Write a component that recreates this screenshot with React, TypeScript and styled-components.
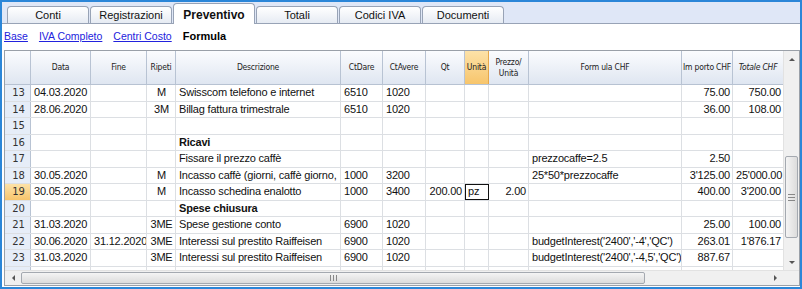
import React from "react";
import styled, { createGlobalStyle, css } from "styled-components";

const GlobalStyle = createGlobalStyle`
  html, body {
    margin: 0;
    padding: 0;
    overflow: hidden;
    background: #ffffff;
  }
`;

const cols = "26px 60px 56px 29px 165px 42px 43px 39px 24px 40px 153px 51px 51px";

type Align = "left" | "right" | "center";

interface RowData {
  n: number;
  data?: string;
  fine?: string;
  rip?: string;
  desc?: string;
  bold?: boolean;
  dare?: string;
  avere?: string;
  qt?: string;
  unit?: string;
  prezzo?: string;
  formula?: string;
  importo?: string;
  totale?: string;
  current?: boolean;
}

const rows: RowData[] = [
  { n: 13, data: "04.03.2020", rip: "M", desc: "Swisscom telefono e internet", dare: "6510", avere: "1020", importo: "75.00", totale: "750.00" },
  { n: 14, data: "28.06.2020", rip: "3M", desc: "Billag fattura trimestrale", dare: "6510", avere: "1020", importo: "36.00", totale: "108.00" },
  { n: 15 },
  { n: 16, desc: "Ricavi", bold: true },
  { n: 17, desc: "Fissare il prezzo caffè", formula: "prezzocaffe=2.5", importo: "2.50" },
  { n: 18, data: "30.05.2020", rip: "M", desc: "Incasso caffè (giorni, caffè giorno,", dare: "1000", avere: "3200", formula: "25*50*prezzocaffe", importo: "3'125.00", totale: "25'000.00" },
  { n: 19, data: "30.05.2020", rip: "M", desc: "Incasso  schedina enalotto", dare: "1000", avere: "3400", qt: "200.00", unit: "pz", prezzo: "2.00", importo: "400.00", totale: "3'200.00", current: true },
  { n: 20, desc: "Spese chiusura", bold: true },
  { n: 21, data: "31.03.2020", rip: "3ME", desc: "Spese gestione conto", dare: "6900", avere: "1020", importo: "25.00", totale: "100.00" },
  { n: 22, data: "30.06.2020", fine: "31.12.2020", rip: "3ME", desc: "Interessi sul prestito Raiffeisen", dare: "6900", avere: "1020", formula: "budgetInterest('2400','-4','QC')", importo: "263.01", totale: "1'876.17" },
  { n: 23, data: "31.03.2020", rip: "3ME", desc: "Interessi sul prestito Raiffeisen", dare: "6900", avere: "1020", formula: "budgetInterest('2400','-4,5','QC')", importo: "887.67" },
  { n: 24 },
];

const tabs = ["Conti", "Registrazioni", "Preventivo", "Totali", "Codici IVA", "Documenti"];

export default function App() {
  return (
    <>
      <GlobalStyle />
      <Frame>
        <TabBar>
          {tabs.map((t) => (
            <Tab key={t} $active={t === "Preventivo"}>
              {t}
            </Tab>
          ))}
        </TabBar>
        <Content>
          <Views>
            <ViewLink>Base</ViewLink>
            <ViewLink>IVA Completo</ViewLink>
            <ViewLink>Centri Costo</ViewLink>
            <ViewActive>Formula</ViewActive>
          </Views>
          <Table>
            <TableMain>
              <Body>
                <Header>
                  <HeadCell />
                  <HeadCell>Data</HeadCell>
                  <HeadCell>Fine</HeadCell>
                  <HeadCell>Ripeti</HeadCell>
                  <HeadCell>Descrizione</HeadCell>
                  <HeadCell>CtDare</HeadCell>
                  <HeadCell>CtAvere</HeadCell>
                  <HeadCell>Qt</HeadCell>
                  <HeadCell $hot>Unità</HeadCell>
                  <HeadCell $wrap>
                    Prezzo/
                    <br />
                    Unità
                  </HeadCell>
                  <HeadCell>Form ula CHF</HeadCell>
                  <HeadCell>Im porto CHF</HeadCell>
                  <HeadCell $italic>Totale CHF</HeadCell>
                </Header>
                {rows.map((r) => (
                  <Row key={r.n}>
                    <RowNum $hot={r.current}>{r.n}</RowNum>
                    <Cell>{r.data}</Cell>
                    <Cell>{r.fine}</Cell>
                    <Cell $align="center">{r.rip}</Cell>
                    <Cell $bold={r.bold}>{r.desc}</Cell>
                    <Cell>{r.dare}</Cell>
                    <Cell>{r.avere}</Cell>
                    <Cell $align="right">{r.qt}</Cell>
                    {r.current ? <EditCell>{r.unit}</EditCell> : <Cell>{r.unit}</Cell>}
                    <Cell $align="right">{r.prezzo}</Cell>
                    <Cell>{r.formula}</Cell>
                    <Cell $align="right">{r.importo}</Cell>
                    <Cell $align="right">{r.totale}</Cell>
                  </Row>
                ))}
              </Body>
              <VScroll>
                <ArrowBtn>
                  <Tri $dir="up" />
                </ArrowBtn>
                <VTrack>
                  <VThumb>
                    <Grip />
                  </VThumb>
                </VTrack>
                <ArrowBtn>
                  <Tri $dir="down" />
                </ArrowBtn>
              </VScroll>
            </TableMain>
            <HScroll>
              <HArrow>
                <Tri $dir="left" />
              </HArrow>
              <HTrack>
                <HThumb>
                  <HGrip />
                </HThumb>
              </HTrack>
              <HArrow>
                <Tri $dir="right" />
              </HArrow>
              <Corner />
            </HScroll>
          </Table>
        </Content>
      </Frame>
    </>
  );
}

const Frame = styled.div`
  width: 802px;
  height: 289px;
  box-sizing: border-box;
  border: 2px solid #2b86d8;
  background: #dfe7f7;
  display: flex;
  flex-direction: column;
  font-family: "Liberation Sans", Arial, sans-serif;
  overflow: hidden;
`;

const TabBar = styled.div`
  height: 21px;
  display: flex;
  align-items: flex-end;
  padding-left: 5px;
  gap: 1px;
`;

const Tab = styled.div<{ $active?: boolean }>`
  width: 82px;
  height: 17px;
  box-sizing: border-box;
  border: 1px solid #98a3b6;
  border-bottom: none;
  border-radius: 4px 4px 0 0;
  background: linear-gradient(#ffffff, #e6ebf3);
  font-size: 11px;
  color: #111;
  display: flex;
  align-items: center;
  justify-content: center;
  ${(p) =>
    p.$active &&
    css`
      height: 21px;
      margin-bottom: -1px;
      background: #ffffff;
      font-weight: bold;
      font-size: 12px;
      position: relative;
      padding-top: 1px;
    `}
`;

const Content = styled.div`
  flex: 1;
  background: #ffffff;
  border-top: 1px solid #98a3b6;
  display: flex;
  flex-direction: column;
  padding: 0 0 1px 2px;
  min-height: 0;
`;

const Views = styled.div`
  height: 26px;
  display: flex;
  align-items: center;
  gap: 11px;
  padding: 0 0 2px 0;
  box-sizing: border-box;
  font-size: 10.5px;
`;

const ViewLink = styled.span`
  color: #2222dd;
  text-decoration: underline;
`;

const ViewActive = styled.span`
  color: #000;
  font-weight: bold;
  font-size: 11px;
`;

const Table = styled.div`
  flex: 1;
  border: 1px solid #9aa0a8;
  display: flex;
  flex-direction: column;
  min-height: 0;
`;

const TableMain = styled.div`
  flex: 1;
  display: flex;
  min-height: 0;
  overflow: hidden;
`;

const Body = styled.div`
  width: 779px;
  overflow: hidden;
`;

const Header = styled.div`
  display: grid;
  grid-template-columns: ${cols};
  height: 34px;
  background: linear-gradient(#fbfcfe, #dfe6f1);
  border-bottom: 1px solid #b7c2d2;
  box-sizing: border-box;
`;

const HeadCell = styled.div<{ $hot?: boolean; $italic?: boolean; $wrap?: boolean }>`
  border-right: 1px solid #b8c3d3;
  display: flex;
  align-items: center;
  justify-content: center;
  text-align: center;
  font-size: 8.5px;
  line-height: 11px;
  letter-spacing: -0.2px;
  white-space: ${(p) => (p.$wrap ? "normal" : "nowrap")};
  overflow: hidden;
  color: #222;
  font-family: "DejaVu Sans Condensed", "DejaVu Sans", sans-serif;
  font-style: ${(p) => (p.$italic ? "italic" : "normal")};
  ${(p) =>
    p.$hot &&
    css`
      background: linear-gradient(#fde2a8, #f7c56c);
      border-right-color: #e6a84a;
    `}
`;

const Row = styled.div`
  display: grid;
  grid-template-columns: ${cols};
  height: 16.55px;
  box-sizing: border-box;
  border-bottom: 1px solid #dcdfe3;
`;

const Cell = styled.div<{ $align?: Align; $bold?: boolean }>`
  border-right: 1px solid #dcdfe3;
  padding: 0 2px 0 3px;
  font-size: 11px;
  letter-spacing: -0.2px;
  line-height: 15px;
  color: #111;
  white-space: nowrap;
  overflow: hidden;
  text-align: ${(p) => p.$align ?? "left"};
  font-weight: ${(p) => (p.$bold ? "bold" : "normal")};
`;

const EditCell = styled(Cell)`
  border: 1.5px solid #111;
  padding: 0 2px;
  line-height: 12px;
`;

const RowNum = styled.div<{ $hot?: boolean }>`
  border-right: 1px solid #b8c3d3;
  background: ${(p) => (p.$hot ? "linear-gradient(#fde2a8, #f7c56c)" : "#e6edf8")};
  font-size: 10px;
  line-height: 15px;
  color: #333;
  text-align: center;
  padding-left: 2px;
  font-family: "DejaVu Sans", sans-serif;
`;

const VScroll = styled.div`
  width: 15px;
  display: flex;
  flex-direction: column;
  background: #f0f0f0;
  border-left: 1px solid #e2e2e2;
`;

const ArrowBtn = styled.div`
  height: 16px;
  display: flex;
  align-items: center;
  justify-content: center;
`;

const VTrack = styled.div`
  flex: 1;
  display: flex;
  flex-direction: column;
  justify-content: flex-end;
  padding-bottom: 16px;
`;

const VThumb = styled.div`
  height: 80px;
  margin: 0 1px;
  border: 1px solid #a4a9b0;
  border-radius: 2px;
  background: linear-gradient(90deg, #f4f4f4, #dcdcdc);
  display: flex;
  align-items: center;
  justify-content: center;
`;

const Grip = styled.div`
  width: 7px;
  height: 5px;
  border-top: 1px solid #888;
  border-bottom: 1px solid #888;
  position: relative;
  &::after {
    content: "";
    position: absolute;
    left: 0;
    right: 0;
    top: 2px;
    border-top: 1px solid #888;
  }
`;

const HScroll = styled.div`
  height: 14px;
  display: flex;
  background: #f0f0f0;
  border-top: 1px solid #e2e2e2;
`;

const HArrow = styled.div`
  width: 16px;
  display: flex;
  align-items: center;
  justify-content: center;
`;

const HTrack = styled.div`
  flex: 1;
  display: flex;
  padding-right: 122px;
`;

const HThumb = styled.div`
  flex: 1;
  margin: 1px 0;
  border: 1px solid #a4a9b0;
  border-radius: 2px;
  background: linear-gradient(#f4f4f4, #dcdcdc);
  display: flex;
  align-items: center;
  justify-content: center;
`;

const HGrip = styled.div`
  width: 5px;
  height: 6px;
  border-left: 1px solid #888;
  border-right: 1px solid #888;
  position: relative;
  &::after {
    content: "";
    position: absolute;
    top: 0;
    bottom: 0;
    left: 2px;
    border-left: 1px solid #888;
  }
`;

const Corner = styled.div`
  width: 16px;
  background: #f0f0f0;
`;

const Tri = styled.div<{ $dir: "up" | "down" | "left" | "right" }>`
  width: 0;
  height: 0;
  ${(p) =>
    p.$dir === "up"
      ? css`
          border-left: 3px solid transparent;
          border-right: 3px solid transparent;
          border-bottom: 3px solid #555;
        `
      : p.$dir === "down"
      ? css`
          border-left: 3px solid transparent;
          border-right: 3px solid transparent;
          border-top: 3px solid #555;
        `
      : p.$dir === "left"
      ? css`
          border-top: 3px solid transparent;
          border-bottom: 3px solid transparent;
          border-right: 3px solid #555;
        `
      : css`
          border-top: 3px solid transparent;
          border-bottom: 3px solid transparent;
          border-left: 3px solid #555;
        `}
`;
